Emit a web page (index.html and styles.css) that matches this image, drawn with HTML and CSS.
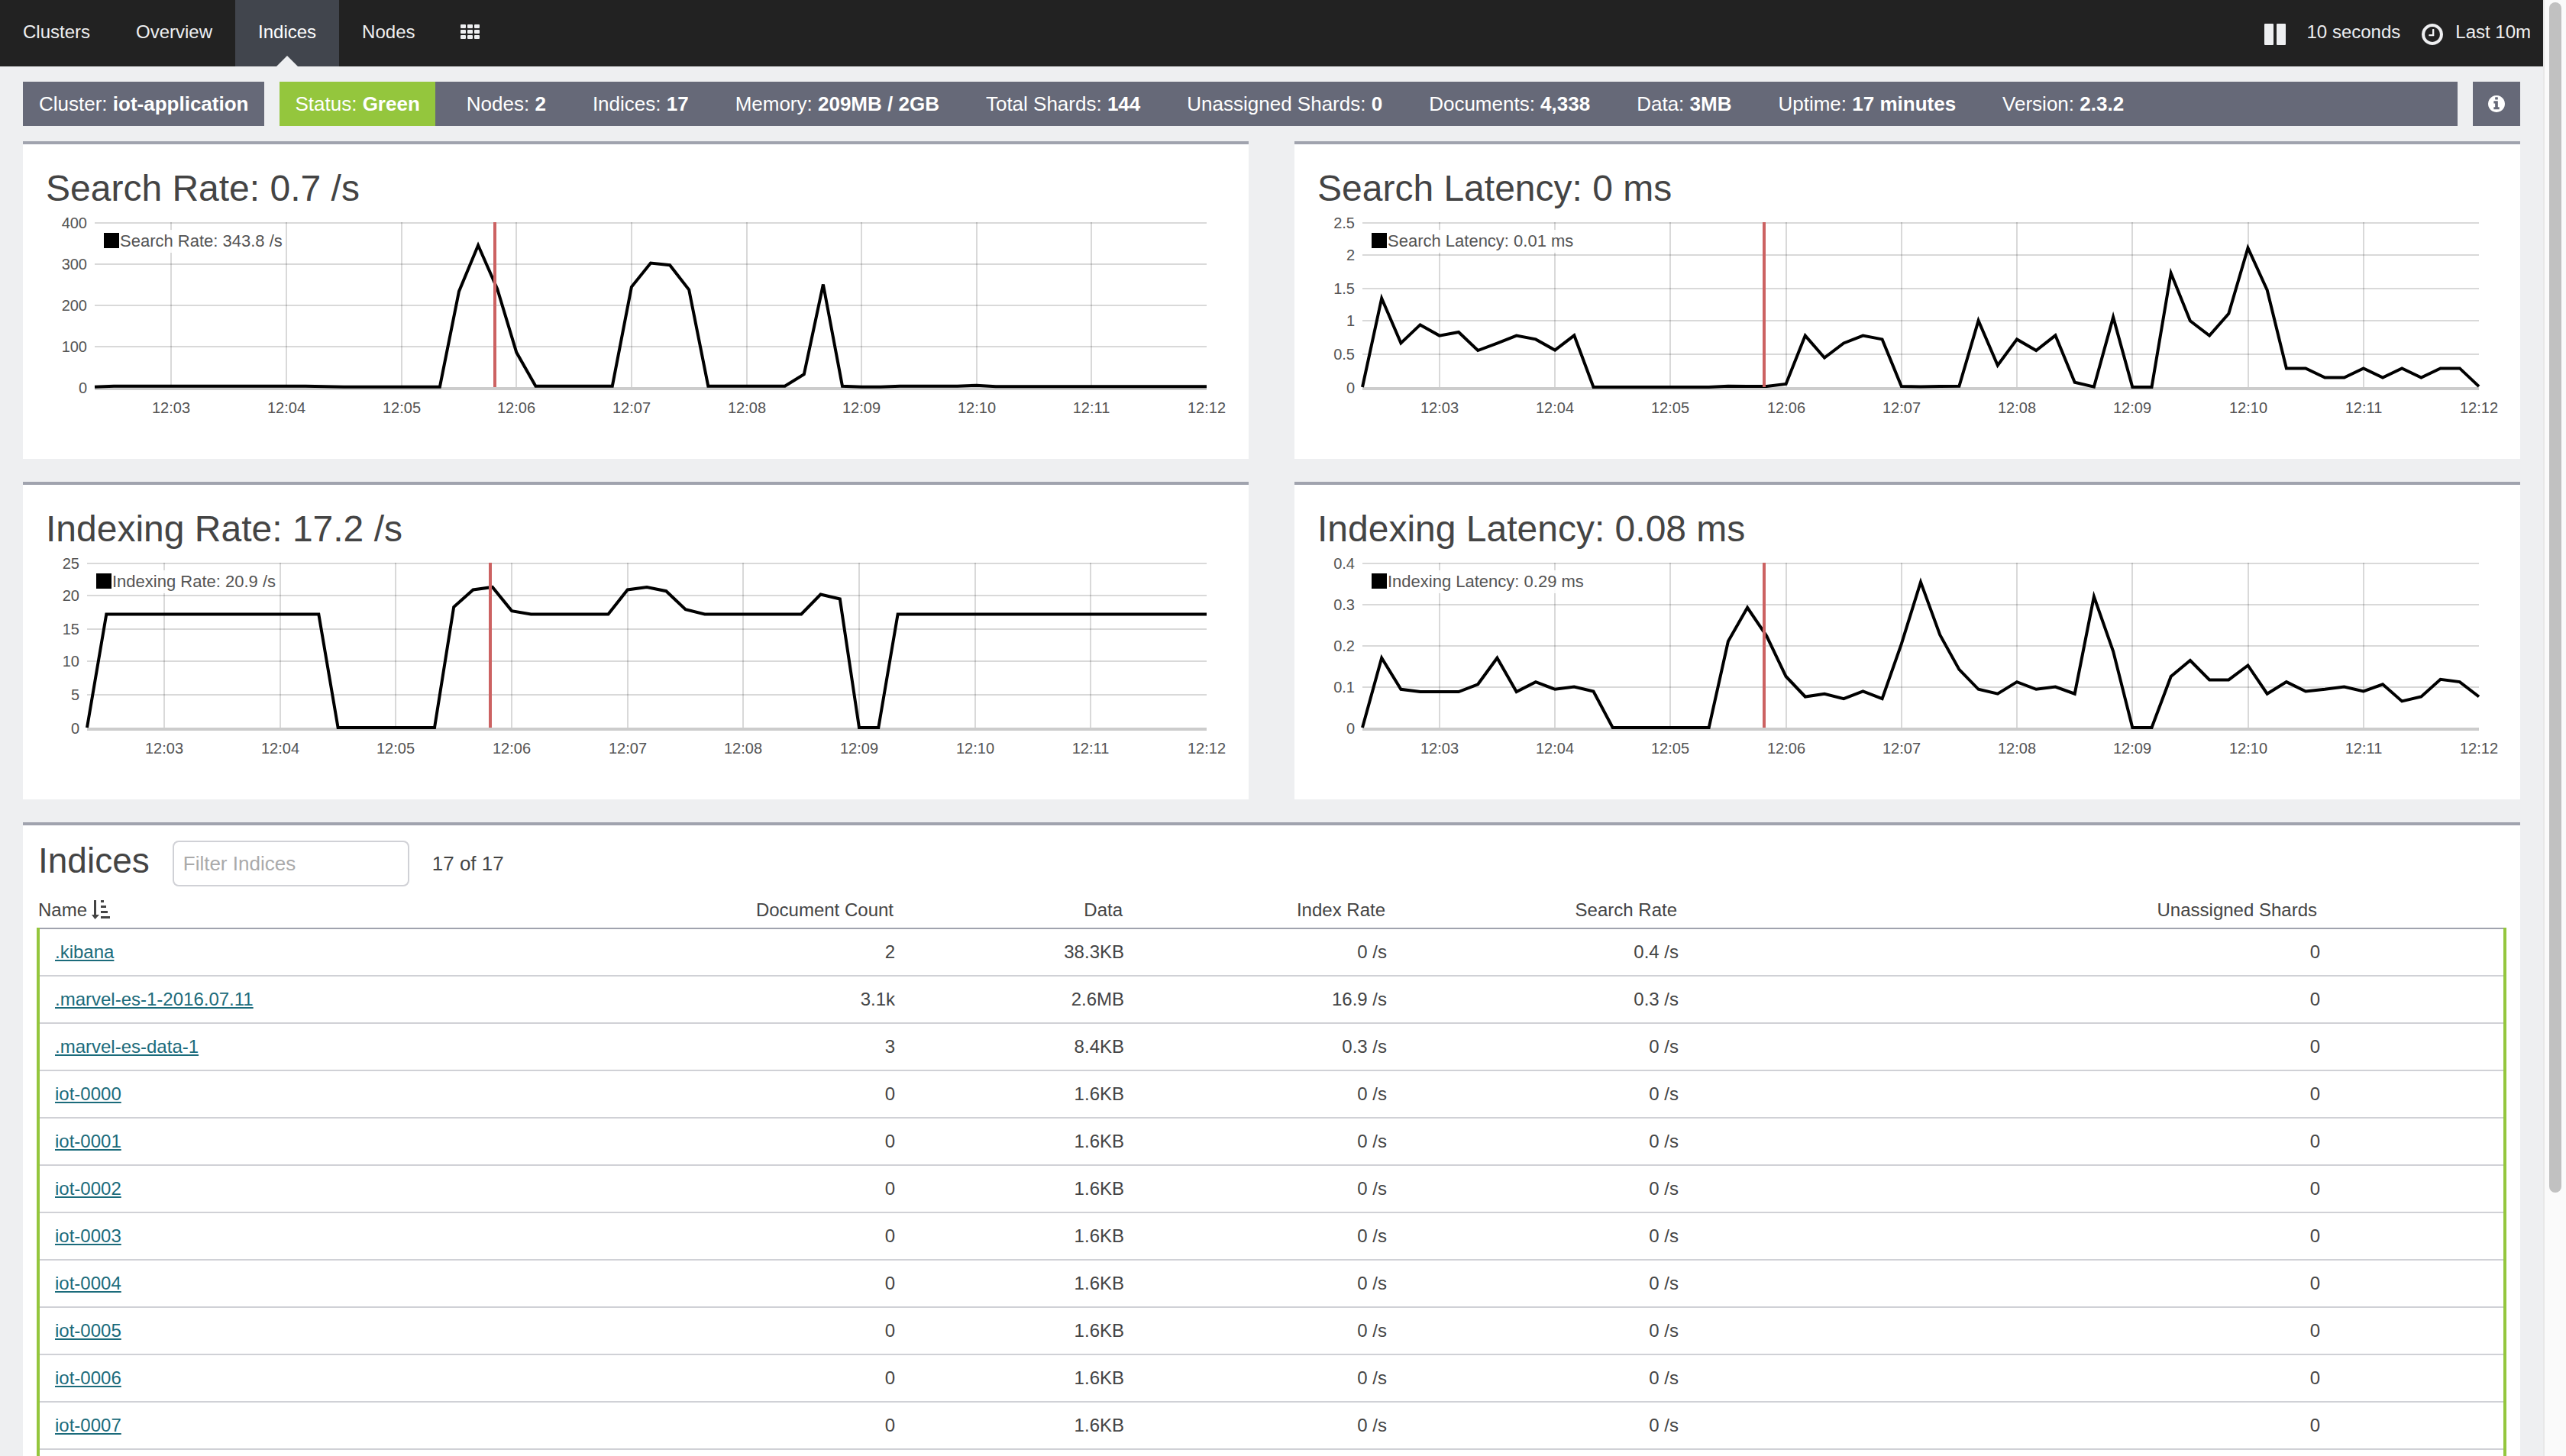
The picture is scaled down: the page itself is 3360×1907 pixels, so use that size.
FILE: index.html
```html
<!DOCTYPE html>
<html lang="en">
<head>
<meta charset="utf-8">
<title>Marvel - Indices</title>
<link rel="stylesheet" href="styles.css">
</head>
<body>
<div class="shell">
  <div class="page">
    <header class="navbar">
      <nav class="tabs">
        <a class="tab" href="#clusters">Clusters</a>
        <a class="tab" href="#overview">Overview</a>
        <a class="tab active" href="#indices">Indices</a>
        <a class="tab" href="#nodes">Nodes</a>
        <a class="tab" href="#apps" aria-label="Apps">
          <svg class="icon-grid" viewBox="0 0 26 20" aria-hidden="true"><path d="M1 0h5q1 0 1 1v3q0 1-1 1H1q-1 0-1-1V1q0-1 1-1zm9 0h5q1 0 1 1v3q0 1-1 1h-5q-1 0-1-1V1q0-1 1-1zm9 0h5q1 0 1 1v3q0 1-1 1h-5q-1 0-1-1V1q0-1 1-1zM1 7h5q1 0 1 1v3q0 1-1 1H1q-1 0-1-1V8q0-1 1-1zm9 0h5q1 0 1 1v3q0 1-1 1h-5q-1 0-1-1V8q0-1 1-1zm9 0h5q1 0 1 1v3q0 1-1 1h-5q-1 0-1-1V8q0-1 1-1zM1 14h5q1 0 1 1v3q0 1-1 1H1q-1 0-1-1v-3q0-1 1-1zm9 0h5q1 0 1 1v3q0 1-1 1h-5q-1 0-1-1v-3q0-1 1-1zm9 0h5q1 0 1 1v3q0 1-1 1h-5q-1 0-1-1v-3q0-1 1-1z"/></svg>
        </a>
      </nav>
      <div class="timepicker">
        <button class="time-button" type="button" aria-label="Pause refresh">
          <svg class="icon-time" viewBox="0 0 28 28" aria-hidden="true"><path d="M1 0h10q1 0 1 1v26q0 1-1 1H1q-1 0-1-1V1q0-1 1-1zm16 0h10q1 0 1 1v26q0 1-1 1H17q-1 0-1-1V1q0-1 1-1z"/></svg>
        </button>
        <button class="time-button" type="button">10 seconds</button>
        <button class="time-button" type="button">
          <svg class="icon-time" viewBox="0 128 1536 1536" aria-hidden="true"><path d="M896 544v448q0 14-9 23t-23 9h-320q-14 0-23-9t-9-23v-64q0-14 9-23t23-9h224v-352q0-14 9-23t23-9h64q14 0 23 9t9 23zm416 352q0-148-73-273t-198-198-273-73-273 73-198 198-73 273 73 273 198 198 273 73 273-73 198-198 73-273zm224 0q0 209-103 385.5t-279.5 279.5-385.5 103-385.5-103-279.5-279.5-103-385.5 103-385.5 279.5-279.5 385.5-103 385.5 103 279.5 279.5 103 385.5z"/></svg>
          Last 10m
        </button>
      </div>
    </header>

    <main class="content">
      <section class="summary">
        <div class="summary-box">Cluster: <b>iot-application</b></div>
        <ul class="summary-box summary-list">
          <li class="status">Status: <b>Green</b></li>
          <li>Nodes: <b>2</b></li>
          <li>Indices: <b>17</b></li>
          <li>Memory: <b>209MB / 2GB</b></li>
          <li>Total Shards: <b>144</b></li>
          <li>Unassigned Shards: <b>0</b></li>
          <li>Documents: <b>4,338</b></li>
          <li>Data: <b>3MB</b></li>
          <li>Uptime: <b>17 minutes</b></li>
          <li>Version: <b>2.3.2</b></li>
        </ul>
        <button class="summary-box info" type="button" aria-label="Info">
          <svg class="icon-info" viewBox="0 128 1536 1536" aria-hidden="true"><path d="M1024 1376v-160q0-14-9-23t-23-9h-96v-512q0-14-9-23t-23-9h-320q-14 0-23 9t-9 23v160q0 14 9 23t23 9h96v320h-96q-14 0-23 9t-9 23v160q0 14 9 23t23 9h448q14 0 23-9t9-23zm-128-896v-160q0-14-9-23t-23-9h-192q-14 0-23 9t-9 23v160q0 14 9 23t23 9h192q14 0 23-9t9-23zm640 416q0 209-103 385.5t-279.5 279.5-385.5 103-385.5-103-279.5-279.5-103-385.5 103-385.5 279.5-279.5 385.5-103 385.5 103 279.5 279.5 103 385.5z"/></svg>
        </button>
      </section>

      <section class="charts">
        <article class="panel chart-panel">
          <h2 class="title">Search Rate: 0.7 /s</h2>
          <svg class="chart" data-chart="searchRate"></svg>
        </article>
        <article class="panel chart-panel">
          <h2 class="title">Search Latency: 0 ms</h2>
          <svg class="chart" data-chart="searchLatency"></svg>
        </article>
        <article class="panel chart-panel">
          <h2 class="title">Indexing Rate: 17.2 /s</h2>
          <svg class="chart" data-chart="indexingRate"></svg>
        </article>
        <article class="panel chart-panel">
          <h2 class="title">Indexing Latency: 0.08 ms</h2>
          <svg class="chart" data-chart="indexingLatency"></svg>
        </article>
      </section>

      <section class="panel table-panel">
        <div class="table-head">
          <h2 class="table-title">Indices</h2>
          <input class="filter" type="text" placeholder="Filter Indices" aria-label="Filter Indices">
          <span class="count">17 of 17</span>
        </div>
        <table class="indices">
          <colgroup>
            <col>
            <col class="col-docs">
            <col class="col-data">
            <col class="col-index">
            <col class="col-search">
            <col class="col-shards">
          </colgroup>
          <thead>
            <tr>
              <th scope="col">Name<svg class="icon-sort" viewBox="0 0 24 26" aria-hidden="true"><path d="M3 1h3v19h4L4.500 26 0 20h3zM12 1h4v3h-4zM12 8h7v3h-7zM12 15h9v3h-9zM12 22h12v3H12z"/></svg></th>
              <th scope="col">Document Count</th>
              <th scope="col">Data</th>
              <th scope="col">Index Rate</th>
              <th scope="col">Search Rate</th>
              <th scope="col">Unassigned Shards</th>
            </tr>
          </thead>
          <tbody>
            <tr><td><a href="#i1">.kibana</a></td><td>2</td><td>38.3KB</td><td>0 /s</td><td>0.4 /s</td><td>0</td></tr>
            <tr><td><a href="#i2">.marvel-es-1-2016.07.11</a></td><td>3.1k</td><td>2.6MB</td><td>16.9 /s</td><td>0.3 /s</td><td>0</td></tr>
            <tr><td><a href="#i3">.marvel-es-data-1</a></td><td>3</td><td>8.4KB</td><td>0.3 /s</td><td>0 /s</td><td>0</td></tr>
            <tr><td><a href="#i4">iot-0000</a></td><td>0</td><td>1.6KB</td><td>0 /s</td><td>0 /s</td><td>0</td></tr>
            <tr><td><a href="#i5">iot-0001</a></td><td>0</td><td>1.6KB</td><td>0 /s</td><td>0 /s</td><td>0</td></tr>
            <tr><td><a href="#i6">iot-0002</a></td><td>0</td><td>1.6KB</td><td>0 /s</td><td>0 /s</td><td>0</td></tr>
            <tr><td><a href="#i7">iot-0003</a></td><td>0</td><td>1.6KB</td><td>0 /s</td><td>0 /s</td><td>0</td></tr>
            <tr><td><a href="#i8">iot-0004</a></td><td>0</td><td>1.6KB</td><td>0 /s</td><td>0 /s</td><td>0</td></tr>
            <tr><td><a href="#i9">iot-0005</a></td><td>0</td><td>1.6KB</td><td>0 /s</td><td>0 /s</td><td>0</td></tr>
            <tr><td><a href="#i10">iot-0006</a></td><td>0</td><td>1.6KB</td><td>0 /s</td><td>0 /s</td><td>0</td></tr>
            <tr><td><a href="#i11">iot-0007</a></td><td>0</td><td>1.6KB</td><td>0 /s</td><td>0 /s</td><td>0</td></tr>
            <tr><td></td><td></td><td></td><td></td><td></td><td></td></tr>
          </tbody>
        </table>
      </section>
    </main>
  </div>
  <div class="scrollbar" aria-hidden="true"><div class="thumb"></div></div>
</div>
<script src="charts.js"></script>
</body>
</html>
```
FILE: styles.css
```css
* {
  box-sizing: border-box;
}

body {
  margin: 0;
  background: #eeeff1;
  color: #444;
  font-family: "Liberation Sans", Arial, sans-serif;
  font-size: 24px;
  line-height: 28px;
}

button {
  border: 0;
  font: inherit;
  cursor: pointer;
}

.shell {
  display: flex;
  height: 100vh;
  overflow: hidden;
}

.page {
  flex: 1;
  min-width: 0;
}

/* Top navigation */
.navbar {
  display: flex;
  justify-content: space-between;
  height: 87px;
  background: #222;
  color: #eeeff1;
}

.tabs {
  display: flex;
}

.tab {
  position: relative;
  display: flex;
  align-items: center;
  padding: 0 30px 3px;
  color: inherit;
  text-decoration: none;
}

.tab.active {
  background: #41454d;
  color: #fff;
}

.tab.active::after {
  content: "";
  position: absolute;
  bottom: 0;
  left: 50%;
  margin-left: -14px;
  border: 14px solid transparent;
  border-top: 0;
  border-bottom-color: #eeeff1;
}

.icon-grid {
  width: 26px;
  height: 20px;
  fill: currentColor;
}

.timepicker {
  display: flex;
  align-items: center;
  gap: 28px;
  padding: 0 16px 3px 0;
}

.time-button {
  display: flex;
  align-items: center;
  gap: 16px;
  padding: 0;
  background: none;
  color: inherit;
}

.icon-time {
  width: 28px;
  height: 28px;
  margin-top: 6px;
  fill: currentColor;
}

/* Cluster summary */
.content {
  padding: 20px 30px;
}

.summary {
  display: flex;
  gap: 20px;
  margin-bottom: 20px;
  font-size: 26px;
  line-height: 58px;
}

.summary-box {
  padding: 0 21px;
  background: #666978;
  color: #fff;
  white-space: nowrap;
}

.summary-list {
  display: flex;
  flex: 1;
  gap: 21px;
  margin: 0;
  padding: 0;
  list-style: none;
}

.summary-list li {
  padding: 0 20px;
}

.summary-list .status {
  background: #94c63d;
}

.info {
  display: flex;
  align-items: center;
  padding: 0 20px;
}

.icon-info {
  width: 22px;
  height: 22px;
  fill: currentColor;
}

/* Panels */
.panel {
  border-top: 4px solid #a0a3ae;
  background: #fff;
}

.title {
  margin: 0;
  font-size: 48px;
  font-weight: 400;
  line-height: 60px;
}

.charts {
  display: grid;
  grid-template-columns: 1fr 1fr;
  gap: 30px 60px;
  margin-bottom: 30px;
}

.chart-panel {
  padding: 28px 30px 50px;
}

.chart {
  display: block;
  width: 100%;
  height: auto;
  overflow: visible;
  fill: #545454;
  font-size: 20px;
}

.chart .grid {
  stroke: #000;
  stroke-opacity: .15;
  stroke-width: 2;
}

.chart .axis {
  stroke: #ccc;
  stroke-width: 4;
}

.chart .series {
  fill: none;
  stroke: #000;
  stroke-width: 4;
}

.chart .crosshair {
  stroke: #cc6262;
  stroke-width: 4;
}

.chart .y-label {
  text-anchor: end;
}

.chart .x-label {
  text-anchor: middle;
}

.chart .legend-back {
  fill: #fff;
  fill-opacity: .85;
}

.chart .legend-swatch {
  fill: #000;
}

.chart .legend-text {
  font-size: 22px;
}

/* Indices table */
.table-panel {
  padding: 20px 18px;
}

.table-head {
  display: flex;
  align-items: center;
  gap: 30px;
  padding-left: 2px;
  font-size: 26px;
}

.table-title {
  align-self: flex-start;
  margin: 0;
  font-size: 46px;
  font-weight: 400;
  line-height: 52px;
}

.filter {
  width: 310px;
  height: 60px;
  padding: 0 12px;
  border: 2px solid #d0d1d6;
  border-radius: 8px;
  background: #fff;
  color: #444;
  font: inherit;
}

.filter::placeholder {
  color: #aaa;
  opacity: 1;
}

.indices {
  width: 100%;
  margin-top: 12px;
  border-collapse: collapse;
  table-layout: fixed;
}

.col-docs {
  width: 344px;
}

.col-data {
  width: 300px;
}

.col-index {
  width: 344px;
}

.col-search {
  width: 382px;
}

.col-shards {
  width: 1060px;
}

.indices th {
  height: 43px;
  padding: 0 24px 4px 0;
  font-weight: 400;
  text-align: right;
}

.indices td {
  height: 62px;
  padding: 0 22px;
  border-bottom: 2px solid #d0d1d6;
  text-align: right;
}

.indices th:first-child {
  text-align: left;
}

.indices td:first-child {
  padding-left: 20px;
  text-align: left;
}

.indices th:last-child {
  padding-right: 246px;
}

.indices td:last-child {
  padding-right: 240px;
}

.indices thead {
  border-bottom: 2px solid #a0a3ae;
}

.indices tbody {
  border-right: 4px solid #94c63d;
  border-left: 4px solid #94c63d;
}

.indices a {
  color: #1b6b7b;
}

.icon-sort {
  width: 24px;
  height: 26px;
  margin-left: 6px;
  fill: currentColor;
  vertical-align: -4px;
}

/* Scroll track */
.scrollbar {
  width: 30px;
  padding: 3px 6px;
  border-left: 2px solid #e8e8e8;
  background: #fafafa;
}

.thumb {
  height: 82%;
  border-radius: 8px;
  background: #c1c1c1;
}
```
FILE: charts.js
```javascript
// One sample every ten seconds, from 12:02:20 to 12:12:00.
function run(value, count) {
  return new Array(count).fill(value);
}

var CHARTS = {
  searchRate: {
    legend: 'Search Rate: 343.8 /s', legendWidth: 236, left: 64, right: 1520, cursor: 588,
    ticks: [400, 300, 200, 100, 0],
    values: [0.5].concat(run(2.5, 11), [1.5], run(0.5, 6), [232, 343.8, 238, 84], run(2.5, 5),
      [243, 301, 296, 236], run(2.5, 5), [31, 249, 2.5, 0.5, 0.5], run(2.5, 4), [4], run(1.5, 12))
  },
  searchLatency: {
    legend: 'Search Latency: 0.01 ms', legendWidth: 262, left: 59, right: 1521, cursor: 585,
    ticks: [2.5, 2, 1.5, 1, 0.5, 0],
    values: [0, 1.346, 0.667, 0.945, 0.78, 0.833, 0.556, 0.664, 0.78, 0.725, 0.56, 0.783].concat(run(0, 7),
      [0.015, 0.01, 0.01, 0.046, 0.78, 0.444, 0.667, 0.78, 0.725, 0.01, 0.005, 0.01, 0.015, 1.007, 0.33,
      0.725, 0.556, 0.783, 0.073, 0.004, 1.06, 0, 0, 1.728, 1.003, 0.78, 1.115, 2.11, 1.47, 0.285, 0.285,
      0.143, 0.143, 0.285, 0.143, 0.285, 0.143, 0.285, 0.285, 0.01])
  },
  indexingRate: {
    legend: 'Indexing Rate: 20.9 /s', legendWidth: 240, left: 54, right: 1520, cursor: 582,
    ticks: [25, 20, 15, 10, 5, 0],
    values: [0].concat(run(17.2, 12), run(0, 6), [18.3, 20.9, 21.3, 17.7], run(17.2, 5),
      [20.9, 21.3, 20.7, 17.9], run(17.2, 6), [20.2, 19.5, 0, 0], run(17.2, 17))
  },
  indexingLatency: {
    legend: 'Indexing Latency: 0.29 ms', legendWidth: 278, left: 59, right: 1521, cursor: 585,
    ticks: [0.4, 0.3, 0.2, 0.1, 0],
    values: [0, 0.169, 0.093, 0.087, 0.087, 0.087, 0.105, 0.169, 0.087, 0.111, 0.093, 0.099, 0.088].concat(run(0, 6),
      [0.209, 0.291, 0.222, 0.124, 0.075, 0.082, 0.07, 0.088, 0.07, 0.203, 0.353, 0.225, 0.141, 0.093,
      0.082, 0.111, 0.093, 0.099, 0.082, 0.318, 0.185, 0, 0, 0.124, 0.163, 0.116, 0.116, 0.151, 0.082,
      0.111, 0.088, 0.093, 0.099, 0.088, 0.105, 0.064, 0.075, 0.117, 0.111, 0.075])
  }
};

var TOP = 14;
var HEIGHT = 216;

function line(cls, x1, y1, x2, y2) {
  return '<line class="' + cls + '" x1="' + x1 + '" y1="' + y1 + '" x2="' + x2 + '" y2="' + y2 + '"/>';
}

function text(cls, x, y, label) {
  return '<text class="' + cls + '" x="' + x + '" y="' + y + '">' + label + '</text>';
}

function draw(svg, c) {
  var bottom = TOP + HEIGHT;
  var max = c.ticks[0];
  var step = (c.right - c.left) / 58;
  var out = '';

  c.ticks.forEach(function (tick) {
    var y = TOP + 1 + Math.floor((1 - tick / max) * HEIGHT / 2) * 2;
    if (tick) out += line('grid', c.left, y, c.right, y);
    out += text('y-label', c.left - 10, y + 7, tick);
  });

  for (var minute = 3; minute <= 12; minute++) {
    var x = Math.round(c.left + step * (4 + (minute - 3) * 6));
    if (minute < 12) out += line('grid', x, TOP, x, bottom);
    out += text('x-label', x, TOP + 250, '12:' + String(minute).padStart(2, '0'));
  }

  out += line('axis', c.left, bottom + 2, c.right, bottom + 2);
  out += '<polyline class="series" points="' + c.values.map(function (v, i) {
    return (c.left + i * step).toFixed(1) + ',' + (bottom - v / max * HEIGHT).toFixed(1);
  }).join(' ') + '"/>';
  out += line('crosshair', c.cursor, TOP, c.cursor, bottom);
  out += '<rect class="legend-back" x="' + (c.left + 10) + '" y="' + (TOP + 10) + '" width="' + c.legendWidth + '" height="30"/>';
  out += '<rect class="legend-swatch" x="' + (c.left + 12) + '" y="' + (TOP + 14) + '" width="20" height="20"/>';
  out += text('legend-text', c.left + 33, TOP + 32, c.legend);

  svg.setAttribute('viewBox', '0 0 1545 274');
  svg.innerHTML = out;
}

document.querySelectorAll('.chart').forEach(function (svg) {
  draw(svg, CHARTS[svg.dataset.chart]);
});
```
